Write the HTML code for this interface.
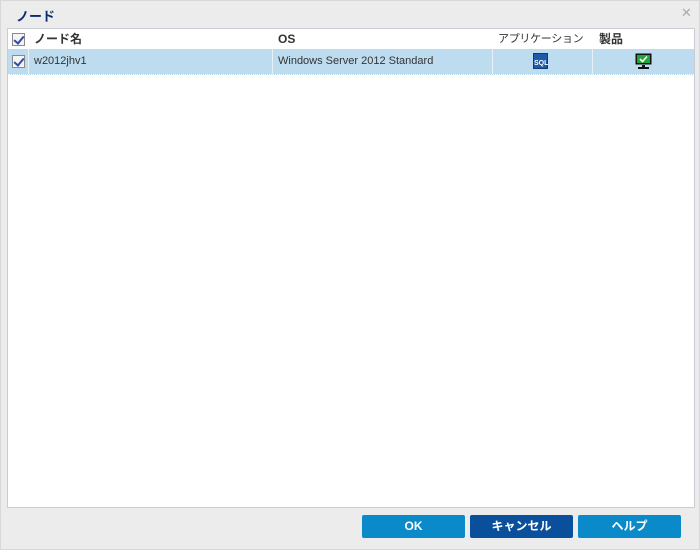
<!DOCTYPE html>
<html><head><meta charset="utf-8"><style>
*{margin:0;padding:0;box-sizing:border-box}
body{width:700px;height:550px;background:#fff;font-family:"Liberation Sans","Noto Sans CJK JP",sans-serif;position:relative;overflow:hidden}
.dlg{position:absolute;left:0;top:0;width:700px;height:550px;background:#ececec;border:1px solid #d8d8d8}
.title{position:absolute;left:15px;top:5px;font-size:13px;font-weight:bold;color:#0c2a6e}
.close{position:absolute;left:680px;top:4px;font-size:13px;color:#aaa}
.grid{position:absolute;left:6px;top:27px;width:688px;height:480px;background:#fff;border:1px solid #c8ccd4}
.hdr{position:absolute;left:0;top:0;width:686px;height:20px;font-size:12px;font-weight:bold;color:#333}
.row{position:absolute;left:0;top:20px;width:686px;height:26px;background:#bedcef;border-bottom:1px dotted #fff;font-size:11px;color:#333}
.c{position:absolute;top:0;height:100%;line-height:20px}
.row .c{line-height:25px}
.sep{position:absolute;top:0;width:1px;height:100%;background:#e8f1f8}
.cb{position:absolute;left:4px;width:13px;height:13px;border:1px solid #8a8a8a;background:#f4f4f4}
.cb:after{content:"";position:absolute;left:3px;top:0px;width:4px;height:8px;border:solid #2c4aa8;border-width:0 2px 2px 0;transform:rotate(40deg)}
.btn{position:absolute;top:514px;width:103px;height:23px;border-radius:2px;color:#fff;font-size:12px;font-weight:bold;text-align:center;line-height:23px}
</style></head><body>
<div class="dlg">
<div class="title">ノード</div>
<div class="close">✕</div>
<div class="grid">
 <div class="hdr">
  <div class="cb" style="top:4px"></div>
  <div class="c" style="left:26px">ノード名</div>
  <div class="c" style="left:270px">OS</div>
  <div class="c" style="left:490px;font-weight:normal;font-size:11px;letter-spacing:-0.3px">アプリケーション</div>
  <div class="c" style="left:591px">製品</div>
 </div>
 <div class="row">
  <div class="cb" style="top:6px"></div>
  <div class="sep" style="left:20px"></div>
  <div class="c" style="left:26px">w2012jhv1</div>
  <div class="sep" style="left:264px"></div>
  <div class="c" style="left:270px">Windows Server 2012 Standard</div>
  <div class="sep" style="left:484px"></div>
  <div style="position:absolute;left:525px;top:4px;width:15px;height:16px;background:#1d5aa8;border:1px solid #0e3a78;color:#fff;font-size:7px;font-weight:bold;line-height:20px;text-align:center">SQL</div>
  <div class="sep" style="left:584px"></div>
  <svg style="position:absolute;left:627px;top:4px" width="17" height="17" viewBox="0 0 17 17">
   <rect x="0.5" y="0.5" width="16" height="11" fill="#111"/>
   <rect x="2" y="2" width="13" height="8" fill="#1fa83a"/>
   <path d="M5 6 L7.5 8.5 L12 3.5" stroke="#fff" stroke-width="1.6" fill="none"/>
   <rect x="7" y="12" width="3" height="2" fill="#111"/>
   <rect x="3" y="14" width="11" height="2" fill="#111"/>
  </svg>
 </div>
</div>
<div class="btn" style="left:361px;background:#0a8ac9">OK</div>
<div class="btn" style="left:469px;background:#0a4f9c">キャンセル</div>
<div class="btn" style="left:577px;background:#0a8ac9">ヘルプ</div>
</div>
</body></html>
